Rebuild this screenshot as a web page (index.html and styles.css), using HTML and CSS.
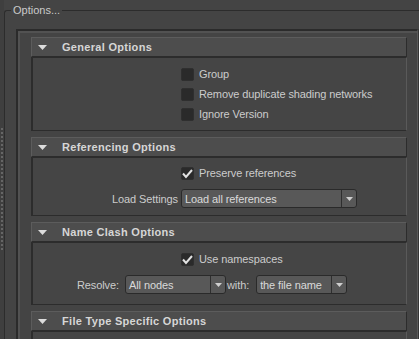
FILE: index.html
```html
<!DOCTYPE html>
<html>
<head>
<meta charset="utf-8">
<link rel="stylesheet" href="styles.css">
</head>
<body>
<div class="splitter"><div class="grip"></div></div>
<fieldset class="options">
  <legend class="options-title">Options...</legend>
  <div class="scroll">
    <section class="sec">
      <div class="sec-head">
        <svg class="tri" width="9" height="5" viewBox="0 0 9 5"><path d="M0 0H9L4.5 5Z" fill="#dcdcdc"/></svg>
        <span class="sec-title">General Options</span>
      </div>
      <div class="sec-body general">
        <div class="chk"><span class="box"></span><span class="lbl">Group</span></div>
        <div class="chk"><span class="box"></span><span class="lbl">Remove duplicate shading networks</span></div>
        <div class="chk"><span class="box"></span><span class="lbl">Ignore Version</span></div>
      </div>
    </section>
    <section class="sec">
      <div class="sec-head">
        <svg class="tri" width="9" height="5" viewBox="0 0 9 5"><path d="M0 0H9L4.5 5Z" fill="#dcdcdc"/></svg>
        <span class="sec-title">Referencing Options</span>
      </div>
      <div class="sec-body referencing">
        <div class="chk field"><span class="box"><svg width="13" height="13" viewBox="0 0 13 13"><polyline points="2,6.5 5,10 11,3" fill="none" stroke="#e2e2e2" stroke-width="2"/></svg></span><span class="lbl">Preserve references</span></div>
        <span class="form-lbl">Load Settings</span>
        <div class="combo load"><span class="combo-text">Load all references</span><span class="combo-arrow"><svg width="7" height="4" viewBox="0 0 7 4"><path d="M0 0H7L3.5 4Z" fill="#cfcfcf"/></svg></span></div>
      </div>
    </section>
    <section class="sec">
      <div class="sec-head">
        <svg class="tri" width="9" height="5" viewBox="0 0 9 5"><path d="M0 0H9L4.5 5Z" fill="#dcdcdc"/></svg>
        <span class="sec-title">Name Clash Options</span>
      </div>
      <div class="sec-body nameclash">
        <div class="chk indent"><span class="box"><svg width="13" height="13" viewBox="0 0 13 13"><polyline points="2,6.5 5,10 11,3" fill="none" stroke="#e2e2e2" stroke-width="2"/></svg></span><span class="lbl">Use namespaces</span></div>
        <div class="resolve-row">
          <span class="lbl">Resolve:</span>
          <div class="combo nodes"><span class="combo-text">All nodes</span><span class="combo-arrow"><svg width="7" height="4" viewBox="0 0 7 4"><path d="M0 0H7L3.5 4Z" fill="#cfcfcf"/></svg></span></div>
          <span class="lbl with">with:</span>
          <div class="combo fname"><span class="combo-text">the file name</span><span class="combo-arrow"><svg width="7" height="4" viewBox="0 0 7 4"><path d="M0 0H7L3.5 4Z" fill="#cfcfcf"/></svg></span></div>
        </div>
      </div>
    </section>
    <section class="sec">
      <div class="sec-head">
        <svg class="tri" width="9" height="5" viewBox="0 0 9 5"><path d="M0 0H9L4.5 5Z" fill="#dcdcdc"/></svg>
        <span class="sec-title">File Type Specific Options</span>
      </div>
      <div class="sec-body filetype"></div>
    </section>
  </div>
</fieldset>
</body>
</html>
```
FILE: styles.css
```css
html, body {
  margin: 0;
  padding: 0;
}
body {
  width: 419px;
  height: 339px;
  overflow: hidden;
  background: #444444;
  display: flex;
  font-family: "Liberation Sans", Arial, sans-serif;
  font-size: 11px;
  color: #cccccc;
}
.splitter {
  flex: none;
  width: 4px;
  background: #3f3f3f;
}
.grip {
  margin-top: 128px;
  margin-left: 1px;
  width: 2px;
  height: 124px;
  background: repeating-linear-gradient(to bottom, #666 0 2px, transparent 2px 4px);
}
.options {
  flex: 1;
  min-width: 0;
  margin: 4px 0 0 0;
  padding: 0;
  border: 1px solid #2c2c2c;
  border-right: none;
  border-bottom: none;
  border-top-left-radius: 3px;
}
.options-title {
  margin-left: 6px;
  padding: 0 2px;
  line-height: 12px;
  color: #cacaca;
  letter-spacing: 0;
}
.scroll {
  margin: 13px 0 0 11px;
  width: 402px;
  height: 320px;
  box-sizing: border-box;
  border-top: 2px solid #2b2b2b;
  border-left: 2px solid #2b2b2b;
  border-right: 1px solid #595959;
  box-shadow: inset 2px 2px 0 #525252, 1px 0 0 #363636;
  padding: 6px 10px 0 13px;
  overflow: hidden;
}
.sec {
  margin-bottom: 6px;
}
.sec-head {
  height: 20px;
  box-sizing: border-box;
  background: #4d4d4d;
  border-top: 1px solid #5c5c5c;
  border-left: 1px solid #5c5c5c;
  border-right: 1px solid #2c2c2c;
  border-bottom: 1px solid #2c2c2c;
  display: flex;
  align-items: center;
  padding-left: 6px;
}
.tri {
  flex: none;
  display: block;
}
.sec-title {
  margin-left: 15px;
  font-weight: bold;
  color: #d6d6d6;
  letter-spacing: 0.3px;
}
.sec-body {
  background: #454545;
  border-top: 1px solid #2c2c2c;
  border-left: 2px solid #2c2c2c;
  border-bottom: 1px solid #2c2c2c;
  border-right: 1px solid #5a5a5a;
}
.lbl, .form-lbl, .combo-text {
  letter-spacing: -0.1px;
  white-space: nowrap;
}
.chk {
  height: 20px;
  display: flex;
  align-items: center;
}
.box {
  flex: none;
  width: 13px;
  height: 13px;
  box-sizing: border-box;
  background: #2a2a2a;
  border: 1px solid #2f2f2f;
  border-radius: 2px;
  margin-right: 5px;
  position: relative;
}
.box svg {
  display: block;
  margin: -1px 0 0 -1px;
}
.general {
  padding: 6px 0 6px 148px;
}
.referencing {
  display: grid;
  grid-template-columns: 145px 1fr;
  column-gap: 3px;
  row-gap: 6px;
  padding: 5px 0 7px 0;
  align-items: center;
}
.referencing .field {
  grid-column: 2;
}
.form-lbl {
  text-align: right;
}
.combo {
  height: 19px;
  box-sizing: border-box;
  border: 1px solid #2a2a2a;
  border-radius: 3px;
  background: #585858;
  display: flex;
  align-items: center;
  color: #dadada;
}
.combo-text {
  flex: 1;
  padding-left: 3px;
}
.combo-arrow {
  flex: none;
  width: 14px;
  align-self: stretch;
  border-left: 1px solid #2e2e2e;
  display: flex;
  align-items: center;
  justify-content: center;
}
.combo-arrow svg {
  display: block;
}
.load {
  width: 176px;
}
.nameclash {
  padding: 6px 0 10px 0;
}
.nameclash .indent {
  padding-left: 148px;
}
.resolve-row {
  margin-top: 6px;
  display: flex;
  align-items: center;
  padding-left: 44px;
}
.nodes {
  width: 101px;
  margin-left: 6px;
}
.with {
  margin: 0 7px 0 1px;
}
.fname {
  width: 91px;
}
.filetype {
  height: 40px;
}
```
